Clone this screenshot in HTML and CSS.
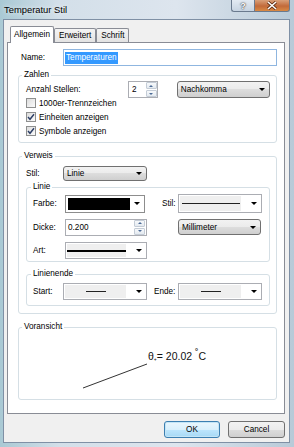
FILE: index.html
```html
<!DOCTYPE html>
<html lang="de">
<head>
  <meta charset="UTF-8">
  <title>Temperatur Stil</title>
  <link rel="stylesheet" href="styles.css">
</head>
<body>
  <div class="window">
    <div class="titlebar">
      <span class="title">Temperatur Stil</span>
      <div class="caption-buttons">
        <span class="cap-btn help">?</span>
        <span class="cap-btn close">
          <svg width="12" height="9" viewBox="0 0 12 9"><path d="M2 1 L10 8 M10 1 L2 8" stroke="#5a2a10" stroke-width="3"/><path d="M2 1 L10 8 M10 1 L2 8" stroke="#fff" stroke-width="1.6"/></svg>
        </span>
      </div>
    </div>

    <div class="dialog">
      <div class="tabs">
        <span class="tab active">Allgemein</span>
        <span class="tab">Erweitert</span>
        <span class="tab">Schrift</span>
      </div>

      <div class="panel">
        <div class="name-row">
          <label class="lbl name-lbl">Name:</label>
          <div class="textbox name-box"><span class="sel">Temperaturen</span></div>
        </div>

        <fieldset class="group zahlen">
          <legend>Zahlen</legend>
          <div class="stellen-row">
            <label class="lbl stellen-lbl">Anzahl Stellen:</label>
            <div class="textbox spin">
              <span class="value">2</span>
              <span class="spinner"><i class="up"></i><i class="down"></i></span>
            </div>
            <div class="combo nachkomma">Nachkomma<i class="arrow"></i></div>
          </div>
          <div class="checks">
            <label class="check"><span class="box"></span>1000er-Trennzeichen</label>
            <label class="check"><span class="box checked"><svg width="8" height="8" viewBox="0 0 8 8"><path d="M1 4 L3 6.3 L7 1.2" fill="none" stroke="#2c3e66" stroke-width="1.4"/></svg></span>Einheiten anzeigen</label>
            <label class="check"><span class="box checked"><svg width="8" height="8" viewBox="0 0 8 8"><path d="M1 4 L3 6.3 L7 1.2" fill="none" stroke="#2c3e66" stroke-width="1.4"/></svg></span>Symbole anzeigen</label>
          </div>
        </fieldset>

        <fieldset class="group verweis">
          <legend>Verweis</legend>
          <div class="stil-row">
            <label class="lbl stil-lbl">Stil:</label>
            <div class="combo linie-combo">Linie<i class="arrow"></i></div>
          </div>

          <fieldset class="group sub linie">
            <legend>Linie</legend>
            <div class="linie-grid">
              <label class="lbl">Farbe:</label>
              <div class="ownerdraw color-combo"><span class="swatch"></span><i class="arrow"></i></div>
              <span></span>
              <label class="lbl">Stil:</label>
              <div class="ownerdraw line-combo stil-combo"><span class="well"><span class="stroke thin"></span></span><i class="arrow"></i></div>

              <label class="lbl">Dicke:</label>
              <div class="textbox dicke"><span class="value">0.200</span><span class="spinner"><i class="up"></i><i class="down"></i></span></div>
              <span></span>
              <span></span>
              <div class="combo mm">Millimeter<i class="arrow"></i></div>

              <label class="lbl">Art:</label>
              <div class="ownerdraw line-combo art-combo"><span class="well"><span class="stroke thick"></span></span><i class="arrow"></i></div>
            </div>
          </fieldset>

          <fieldset class="group sub ende">
            <legend>Linienende</legend>
            <div class="ende-row">
              <label class="lbl start-lbl">Start:</label>
              <div class="ownerdraw line-combo"><span class="well"><span class="stroke short"></span></span><i class="arrow"></i></div>
              <label class="lbl ende-lbl">Ende:</label>
              <div class="ownerdraw line-combo"><span class="well"><span class="stroke short"></span></span><i class="arrow"></i></div>
            </div>
          </fieldset>
        </fieldset>

        <fieldset class="group preview">
          <legend>Voransicht</legend>
          <svg class="canvas" width="257" height="67" viewBox="0 0 257 67">
            <line x1="64" y1="56" x2="128" y2="32" stroke="#333" stroke-width="1"/>
            <text x="129" y="28" font-family="Liberation Sans, Arial, sans-serif" font-size="10.5" fill="#111">θ<tspan font-size="5" dy="1">+</tspan><tspan dy="-1">= 20.02 </tspan><tspan dy="-3">˚</tspan><tspan dy="3">C</tspan></text>
          </svg>
        </fieldset>
      </div>

      <div class="buttons">
        <button class="btn default">OK</button>
        <button class="btn">Cancel</button>
      </div>
    </div>
  </div>
</body>
</html>
```

FILE: styles.css
```css
body {
  margin: 0;
  width: 294px;
  height: 447px;
  overflow: hidden;
  font-family: "Liberation Sans", Arial, sans-serif;
  font-size: 8.2px;
  color: #000;
  background: linear-gradient(90deg, #a9c9d4, #d3dfe9 20%, #dde5ee 60%, #b8cad8);
}
.window {
  display: flex;
  flex-direction: column;
  height: 447px;
}
.titlebar {
  height: 19px;
  display: flex;
  justify-content: space-between;
  align-items: flex-start;
  padding: 0 4px;
}
.title {
  font-size: 9.4px;
  line-height: 20px;
  text-shadow: 0 0 5px #fff;
}
.caption-buttons {
  display: flex;
}
.cap-btn {
  height: 12px;
  display: flex;
  align-items: center;
  justify-content: center;
  box-sizing: border-box;
  border: 1px solid #6a7a8e;
  border-top: none;
}
.help {
  width: 23px;
  border-radius: 0 0 0 3px;
  border-right: none;
  background: linear-gradient(#e3eaf2, #c7d4e2);
  color: #fff;
  font-weight: bold;
  font-size: 9px;
  text-shadow: 0 0 1px #333, 0 0 2px #333;
}
.close {
  width: 36px;
  border-radius: 0 0 3px 0;
  background: linear-gradient(#d9a07a, #c26a3a 55%, #d98a44);
}
.dialog {
  flex: 1;
  margin: 0 4px 4px 3px;
  padding: 0 4px 0 3px;
  background: #f0f0f0;
  border: 1px solid #7f90a5;
  display: flex;
  flex-direction: column;
}
.tabs {
  display: flex;
  align-items: flex-end;
  height: 15px;
  margin-top: 7px;
  padding-left: 3px;
}
.tab {
  height: 13px;
  line-height: 13px;
  padding: 0 4px;
  border: 1px solid #898c95;
  border-bottom: none;
  border-radius: 2px 2px 0 0;
  background: linear-gradient(#f4f4f4, #e3e3e3);
}
.tab.active {
  position: relative;
  z-index: 1;
  height: 16px;
  line-height: 15px;
  padding: 0 3px;
  margin-bottom: -1px;
  background: #fff;
}
.panel {
  box-sizing: border-box;
  height: 372px;
  border: 1px solid #898c95;
  background: #fff;
}
.lbl {
  white-space: nowrap;
}
.name-row {
  display: flex;
  align-items: center;
  height: 17px;
  margin: 6px 7px 0 13px;
}
.name-lbl {
  width: 42px;
}
.textbox {
  box-sizing: border-box;
  height: 17px;
  border: 1px solid #abadb3;
  background: #fff;
  display: flex;
  align-items: center;
}
.name-box {
  flex: 1;
  border-color: #8fb6e0;
  padding-left: 1px;
}
.sel {
  background: #3399ff;
  color: #fff;
  padding: 0 1px;
  line-height: 12px;
}
.group {
  margin: 0;
  padding: 0 6px 0 7px;
  min-width: 0;
  border: 1px solid #d5dfe5;
  border-radius: 3px;
}
.group legend {
  padding: 0 2px;
  margin-left: -4px;
  line-height: 10px;
}
.zahlen {
  margin: 4px 7px 0 10px;
  padding-top: 1px;
  padding-bottom: 4px;
}
.stellen-row {
  display: flex;
  align-items: center;
  height: 17px;
}
.stellen-lbl {
  width: 103px;
}
.spin {
  width: 30px;
  justify-content: space-between;
}
.value {
  padding-left: 3px;
}
.spinner {
  width: 11px;
  height: 15px;
  display: flex;
  flex-direction: column;
  gap: 1px;
}
.spinner i {
  flex: 1;
  display: flex;
  align-items: center;
  justify-content: center;
  border: 1px solid #c4ccd6;
  border-radius: 1px;
  background: linear-gradient(#f7f9fb, #e4eaf0);
}
.spinner .up::after {
  content: "";
  border-left: 2px solid transparent;
  border-right: 2px solid transparent;
  border-bottom: 2px solid #4b6a96;
}
.spinner .down::after {
  content: "";
  border-left: 2px solid transparent;
  border-right: 2px solid transparent;
  border-top: 2px solid #4b6a96;
}
.combo {
  box-sizing: border-box;
  height: 17px;
  padding: 0 4px 0 3px;
  display: flex;
  align-items: center;
  justify-content: space-between;
  border: 1px solid #707070;
  border-radius: 3px;
  background: linear-gradient(#f2f2f2, #ebebeb 50%, #dddddd 50%, #cfcfcf);
}
.arrow {
  width: 0;
  height: 0;
  border-left: 3px solid transparent;
  border-right: 3px solid transparent;
  border-top: 3px solid #000;
}
.nachkomma {
  width: 94px;
  margin-left: 19px;
}
.checks {
  margin-top: -2px;
}
.check {
  display: flex;
  align-items: center;
  height: 14px;
}
.box {
  box-sizing: border-box;
  width: 10px;
  height: 10px;
  margin-right: 3px;
  border: 1px solid #8e8f8f;
  background: linear-gradient(135deg, #dcdcdc, #fbfbfb);
  display: flex;
  align-items: center;
  justify-content: center;
}
.verweis {
  margin: 8px 7px 0 10px;
  padding-bottom: 7px;
}
.stil-row {
  display: flex;
  align-items: center;
  height: 15px;
  margin-top: 5px;
}
.stil-lbl {
  width: 37px;
}
.linie-combo {
  width: 84px;
  height: 15px;
}
.sub {
  padding: 0 6px 0 6px;
}
.sub legend {
  margin-left: -2px;
}
.linie {
  margin-top: 1px;
  padding-top: 2px;
  padding-bottom: 3px;
}
.linie-grid {
  display: grid;
  grid-template-columns: 32px 82px 15px 16px 84px;
  grid-template-rows: 19px 16px 17px;
  row-gap: 6px;
  align-items: center;
}
.linie-grid > :nth-child(n+11) {
  margin-top: 2px;
}
.ownerdraw {
  box-sizing: border-box;
  height: 17px;
  display: flex;
  align-items: center;
  justify-content: space-between;
  padding: 1px 4px 1px 1px;
  border: 1px solid #abadb3;
  background: #fff;
}
.color-combo {
  width: 80px;
  height: 18px;
  padding: 2px 4px 2px 2px;
  border-color: #8d8d8d;
}
.swatch {
  width: 62px;
  height: 12px;
  background: #000;
}
.well {
  align-self: stretch;
  flex: 1;
  margin-right: 10px;
  background: #efefef;
  display: flex;
  align-items: center;
  justify-content: center;
}
.stil-combo {
  height: 19px;
}
.stroke {
  display: block;
  background: #222;
}
.stroke.thin {
  width: 58px;
  height: 1px;
}
.stroke.thick {
  width: 59px;
  height: 2px;
  background: #000;
}
.stroke.short {
  width: 20px;
  height: 1px;
}
.dicke {
  width: 82px;
  justify-content: space-between;
  padding-right: 1px;
}
.dicke .value {
  padding-left: 2px;
}
.mm {
  width: 83px;
  height: 16px;
}
.ende {
  margin-top: 7px;
  padding-top: 4px;
  padding-bottom: 5px;
}
.ende-row {
  display: flex;
  align-items: center;
  height: 17px;
}
.ende-row .line-combo {
  width: 84px;
}
.start-lbl {
  width: 30px;
}
.ende-lbl {
  width: 24px;
  margin-left: 7px;
}
.preview {
  margin: 8px 7px 0 10px;
  padding: 0;
}
.preview legend {
  margin-left: 3px;
}
.canvas {
  display: block;
}
.buttons {
  display: flex;
  justify-content: flex-end;
  gap: 8px;
  margin-top: 7px;
}
.btn {
  box-sizing: border-box;
  width: 57px;
  height: 17px;
  padding: 0;
  font-family: "Liberation Sans", Arial, sans-serif;
  font-size: 8.2px;
  color: #000;
  border: 1px solid #707070;
  border-radius: 3px;
  background: linear-gradient(#f2f2f2, #ebebeb 50%, #dddddd 50%, #cfcfcf);
}
.btn.default {
  width: 56px;
  border-color: #3c7fb1;
  background: linear-gradient(#eaf6fd, #d9f0fc 50%, #bee6fd 50%, #a7d9f5);
  box-shadow: inset 0 0 0 1px #c4e5f6;
}
```
